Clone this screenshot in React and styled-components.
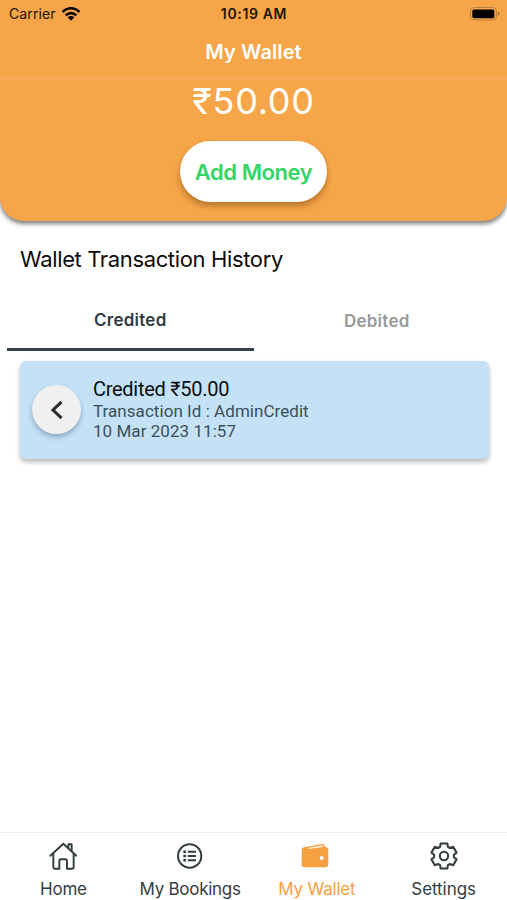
import React, { useState } from 'react';
import styled, { createGlobalStyle } from 'styled-components';

const GlobalStyle = createGlobalStyle`
  * {
    box-sizing: border-box;
  }

  body {
    margin: 0;
    background-color: #fff;
    font-family: Inter, 'Liberation Sans', sans-serif;
  }

  button {
    padding: 0;
    border: none;
    background: none;
    font-family: inherit;
    cursor: pointer;
  }
`;

const Screen = styled.div`
  display: flex;
  flex-direction: column;
  height: 900px;
  overflow: hidden;
`;

const Header = styled.header`
  flex: none;
  height: 220.5px;
  background-color: #f6a548;
  border-radius: 0 0 24px 24px;
  box-shadow: 0 3px 4px rgba(0, 0, 0, 0.5);
`;

const StatusBar = styled.div`
  display: grid;
  grid-template-columns: 1fr auto 1fr;
  align-items: center;
  height: 27px;
  padding: 0 7px 0 9px;
  color: #1d1305;
`;

const Carrier = styled.div`
  display: flex;
  align-items: center;
  gap: 6px;
  font-size: 14px;
  letter-spacing: 0.1px;
`;

const Clock = styled.div`
  font-size: 14px;
  font-weight: 600;
  letter-spacing: 0.65px;
  transform: translateX(-0.5px);
`;

const Battery = styled.div`
  display: flex;
  justify-content: flex-end;
`;

const NavTitle = styled.h1`
  height: 52px;
  margin: 0;
  border-bottom: 1px solid #f3ae61;
  color: #fff;
  font-size: 20px;
  font-weight: 600;
  line-height: 51px;
  letter-spacing: 0.1px;
  text-align: center;
`;

const Balance = styled.div`
  height: 62px;
  color: #fff;
  font-size: 36px;
  line-height: 44px;
  letter-spacing: 0.7px;
  text-align: center;
`;

const AddMoneyButton = styled.button`
  display: block;
  width: 147px;
  height: 61px;
  margin: 0 auto;
  border-radius: 31px;
  background-color: #fff;
  box-shadow: 0 4px 6px rgba(90, 45, 0, 0.4);
  color: #35d466;
  font-size: 22px;
  font-weight: 600;
  letter-spacing: -0.45px;
`;

const Content = styled.main`
  flex: 1;
`;

const SectionTitle = styled.h2`
  margin: 24.5px 0 0 20px;
  color: #0c0c0c;
  font-size: 22px;
  font-weight: 400;
  line-height: 28px;
  letter-spacing: -0.36px;
`;

const Tabs = styled.div`
  display: flex;
  height: 63px;
  margin: 15px 7px 0;
`;

const Tab = styled.button`
  flex: 1;
  padding-top: ${({ $active }) => ($active ? '3px' : '5px')};
  border-bottom: 3px solid ${({ $active }) => ($active ? '#35444a' : 'transparent')};
  color: ${({ $active }) => ($active ? '#2f3d42' : '#999')};
  font-size: 17px;
  font-weight: 600;
  letter-spacing: 0.25px;
`;

const Card = styled.article`
  display: flex;
  align-items: center;
  gap: 12px;
  height: 98px;
  margin: 10px 18px 0 20px;
  padding: 0 0 1px 12px;
  border-radius: 6px;
  background-color: #c5e1f6;
  box-shadow: 0 3px 5px rgba(0, 0, 0, 0.28);
  font-family: Roboto, sans-serif;
`;

const Badge = styled.div`
  display: flex;
  align-items: center;
  justify-content: center;
  width: 49px;
  height: 49px;
  border-radius: 50%;
  background-color: #f0f0f0;
  box-shadow: 0 3px 5px rgba(30, 60, 100, 0.35);
`;

const CardTitle = styled.div`
  color: #0b0f12;
  font-size: 20px;
  line-height: 23px;
  letter-spacing: -0.28px;
`;

const CardLine = styled.div`
  color: #3a4f5b;
  font-size: 17px;
  line-height: 20.5px;
  letter-spacing: 0.05px;
`;

const BottomBar = styled.nav`
  display: flex;
  flex: none;
  height: 68px;
  border-top: 1px solid #ececec;
`;

const NavItem = styled.button`
  display: flex;
  flex: 1;
  flex-direction: column;
  align-items: center;
  gap: 8px;
  padding-top: 9px;
  color: ${({ $active }) => ($active ? '#f5a142' : '#333d3f')};
  font-size: 17px;
  line-height: 22px;
  letter-spacing: ${({ $spacing }) => $spacing};
`;

const WifiIcon = () => (
  <svg width="18" height="14" viewBox="0 0 54 42">
    <g fill="none" stroke="#0c0802" strokeWidth="8">
      <path d="M2 15 C16 0 38 0 52 15" />
      <path d="M11 25 C20 16 34 16 43 25" />
    </g>
    <path d="M17 31 C23 26 31 26 37 31 L27 41 Z" fill="#0c0802" />
  </svg>
);

const BatteryIcon = () => (
  <svg width="31" height="14" viewBox="0 0 31 14">
    <rect x="1.5" y="0.5" width="26" height="12.5" rx="4" fill="none" stroke="#b87f3b" />
    <rect x="3.3" y="2.5" width="22" height="8.7" rx="1.8" fill="#000" />
    <path d="M28.8 4.8 C31 5.6 31 8 28.8 8.8 Z" fill="#a87235" />
  </svg>
);

const ChevronIcon = () => (
  <svg width="14" height="20" viewBox="0 0 14 20">
    <path d="M11.5 1.8 L3 10 L11.5 18.2" fill="none" stroke="#2b2b2b" strokeWidth="3" />
  </svg>
);

const HomeIcon = () => (
  <svg width="28" height="28" viewBox="-1 0 84 84" fill="none" stroke="currentColor" strokeWidth="5.8" strokeLinecap="round" strokeLinejoin="round">
    <path d="M3 41 L42 5 L81 41" />
    <path d="M12 35 V76 Q12 80 16 80 H30 V57 Q30 52 35 52 H48 Q53 52 53 57 V80 H68 Q73 80 73 76 V35" />
    <path d="M57 17 V7 H67 V27" />
  </svg>
);

const ListIcon = () => (
  <svg width="28" height="28" viewBox="1 0 84 84" fill="none" stroke="currentColor" strokeWidth="6">
    <circle cx="42" cy="42" r="35" />
    <path d="M36 29 H61 M36 42 H61 M36 55 H61" />
    <path d="M23 29 H31 M23 42 H31 M23 55 H31" strokeWidth="7.5" />
  </svg>
);

const WalletIcon = () => (
  <svg width="32" height="28" viewBox="0 0 96 84">
    <path
      d="M9 16 L62 6 Q69 5 71 11 L72 15 H74 Q82 16 82 24 V67 Q82 76 73 76 H11 Q2 76 2 67 V24 Q2 17 9 16 Z"
      fill="currentColor"
    />
    <path d="M23 17 L65 10 L66 15 L23 21 Z" fill="#fff" opacity="0.8" />
    <circle cx="62" cy="48" r="6" fill="#fff" />
  </svg>
);

// six teeth, four points each
const gearPoints = [0, 60, 120, 180, 240, 300]
  .flatMap((tooth) =>
    [
      [30, -23],
      [39, -15],
      [39, 15],
      [30, 23],
    ].map(([radius, offset]) => {
      const angle = ((tooth + offset) * Math.PI) / 180;
      return `${42 + radius * Math.sin(angle)},${42 - radius * Math.cos(angle)}`;
    })
  )
  .join(' ');

const GearIcon = () => (
  <svg width="28" height="28" viewBox="0 0 84 84" fill="none" stroke="currentColor" strokeWidth="6.2" strokeLinejoin="round">
    <polygon points={gearPoints} />
    <circle cx="42" cy="42" r="12.5" />
  </svg>
);

const navItems = [
  { label: 'Home', icon: HomeIcon, spacing: '-0.2px' },
  { label: 'My Bookings', icon: ListIcon, spacing: '-0.28px' },
  { label: 'My Wallet', icon: WalletIcon, spacing: '-0.2px' },
  { label: 'Settings', icon: GearIcon, spacing: '-0.05px' },
];

const transactions = [
  { type: 'Credited', amount: '₹50.00', id: 'AdminCredit', date: '10 Mar 2023 11:57' },
];

const App = () => {
  const [tab, setTab] = useState('Credited');
  const [page, setPage] = useState('My Wallet');

  return (
    <Screen>
      <GlobalStyle />
      <Header>
        <StatusBar>
          <Carrier>
            Carrier
            <WifiIcon />
          </Carrier>
          <Clock>10:19 AM</Clock>
          <Battery>
            <BatteryIcon />
          </Battery>
        </StatusBar>
        <NavTitle>My Wallet</NavTitle>
        <Balance>₹50.00</Balance>
        <AddMoneyButton>Add Money</AddMoneyButton>
      </Header>
      <Content>
        <SectionTitle>Wallet Transaction History</SectionTitle>
        <Tabs>
          {['Credited', 'Debited'].map((name) => (
            <Tab key={name} $active={tab === name} onClick={() => setTab(name)}>
              {name}
            </Tab>
          ))}
        </Tabs>
        {transactions
          .filter((item) => item.type === tab)
          .map((item) => (
            <Card key={item.date}>
              <Badge>
                <ChevronIcon />
              </Badge>
              <div>
                <CardTitle>{`${item.type} ${item.amount}`}</CardTitle>
                <CardLine>{`Transaction Id : ${item.id}`}</CardLine>
                <CardLine>{item.date}</CardLine>
              </div>
            </Card>
          ))}
      </Content>
      <BottomBar>
        {navItems.map(({ label, icon: Icon, spacing }) => (
          <NavItem
            key={label}
            $active={page === label}
            $spacing={spacing}
            onClick={() => setPage(label)}
          >
            <Icon />
            {label}
          </NavItem>
        ))}
      </BottomBar>
    </Screen>
  );
};

export default App;
